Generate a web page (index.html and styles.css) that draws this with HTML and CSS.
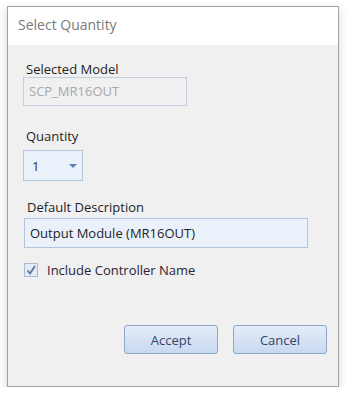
FILE: index.html
```html
<!DOCTYPE html>
<html lang="en">
  <head>
    <meta charset="UTF-8" />
    <meta name="viewport" content="width=device-width, initial-scale=1.0" />
    <title>Select Quantity</title>
    <link rel="stylesheet" href="styles.css">
  </head>
  <body>
    <div class="dialog">
      <div class="titlebar">Select Quantity</div>

      <div class="content">
        <div class="label" id="lblModel">Selected Model</div>
        <div class="textbox disabled" id="model">SCP_MR16OUT</div>

        <div class="label" id="lblQty">Quantity</div>
        <div class="combo" id="qty">
          <span>1</span>
          <span class="arrow"></span>
        </div>

        <div class="label" id="lblDesc">Default Description</div>
        <div class="textbox" id="desc">Output Module (MR16OUT)</div>

        <div class="check-row">
          <span class="checkbox">
            <svg width="12" height="12" viewBox="0 0 12 12">
              <path d="M2.5 6.5 L5 9.5 L10 2" fill="none" stroke="#5b76a6" stroke-width="1.8" />
            </svg>
          </span>
          <span class="check-label">Include Controller Name</span>
        </div>

        <div class="buttons">
          <button>Accept</button>
          <button>Cancel</button>
        </div>
      </div>
    </div>
  </body>
</html>
```

FILE: styles.css
```css
body {
  margin: 0;
  background-color: #fff;
  font-family: "Open Sans", "Noto Sans", sans-serif;
}
.dialog {
  margin: 6px 0 0 7px;
  width: 330px;
  height: 379px;
  border: 1px solid #a3a3a3;
  background-color: #f0f0f0;
  box-shadow: 0 3px 8px rgba(0, 0, 0, 0.18);
  display: flex;
  flex-direction: column;
}
.titlebar {
  height: 38px;
  background-color: #fff;
  color: #7a7a7a;
  font-size: 14px;
  line-height: 36px;
  padding-left: 10px;
}
.content {
  flex: 1;
  display: flex;
  flex-direction: column;
  align-items: flex-start;
  padding: 16px 11px 32px 15px;
}
.label {
  font-size: 13px;
  line-height: 16px;
  color: #1e1e1e;
  padding-left: 3px;
}
#lblQty {
  margin-top: 22px;
}
#lblDesc {
  margin-top: 18px;
  padding-left: 4px;
}
.textbox {
  box-sizing: border-box;
  height: 29px;
  border: 1px solid #b3c5dd;
  background-color: #eaf1fb;
  font-size: 13px;
  line-height: 27px;
  padding-left: 5px;
  color: #1e1e1e;
}
.disabled {
  background-color: #f0f0f0;
  color: #a8a8a8;
  border-color: #c3cfde;
}
#model {
  width: 164px;
}
#desc {
  width: 284px;
  height: 30px;
  line-height: 28px;
  margin-top: 3px;
  margin-left: 1px;
}
.combo {
  box-sizing: border-box;
  width: 60px;
  height: 31px;
  margin-top: 6px;
  border: 1px solid #b3c5dd;
  background-color: #eaf1fb;
  display: flex;
  align-items: center;
  justify-content: space-between;
  padding: 0 5px 0 8px;
  font-size: 13px;
  color: #2a2a3a;
}
.arrow {
  width: 0;
  height: 0;
  border-left: 4px solid transparent;
  border-right: 4px solid transparent;
  border-top: 4px solid #5c80b6;
}
.check-row {
  display: flex;
  align-items: center;
  margin-top: 13px;
  margin-left: 1px;
}
.checkbox {
  box-sizing: border-box;
  width: 14px;
  height: 14px;
  border: 1px solid #a9bad3;
  background-color: #e3ebf6;
  display: flex;
  align-items: center;
  justify-content: center;
}
.check-label {
  font-size: 13px;
  color: #2a2236;
  margin-left: 9px;
}
.buttons {
  margin-top: auto;
  align-self: flex-end;
  display: flex;
  gap: 15px;
}
button {
  box-sizing: border-box;
  width: 94px;
  height: 29px;
  border: 1px solid #8da6cb;
  border-radius: 3px;
  background: linear-gradient(#e4edf8, #c8d9ef);
  font-family: "Open Sans", "Noto Sans", sans-serif;
  font-size: 13px;
  color: #33456a;
}
```
